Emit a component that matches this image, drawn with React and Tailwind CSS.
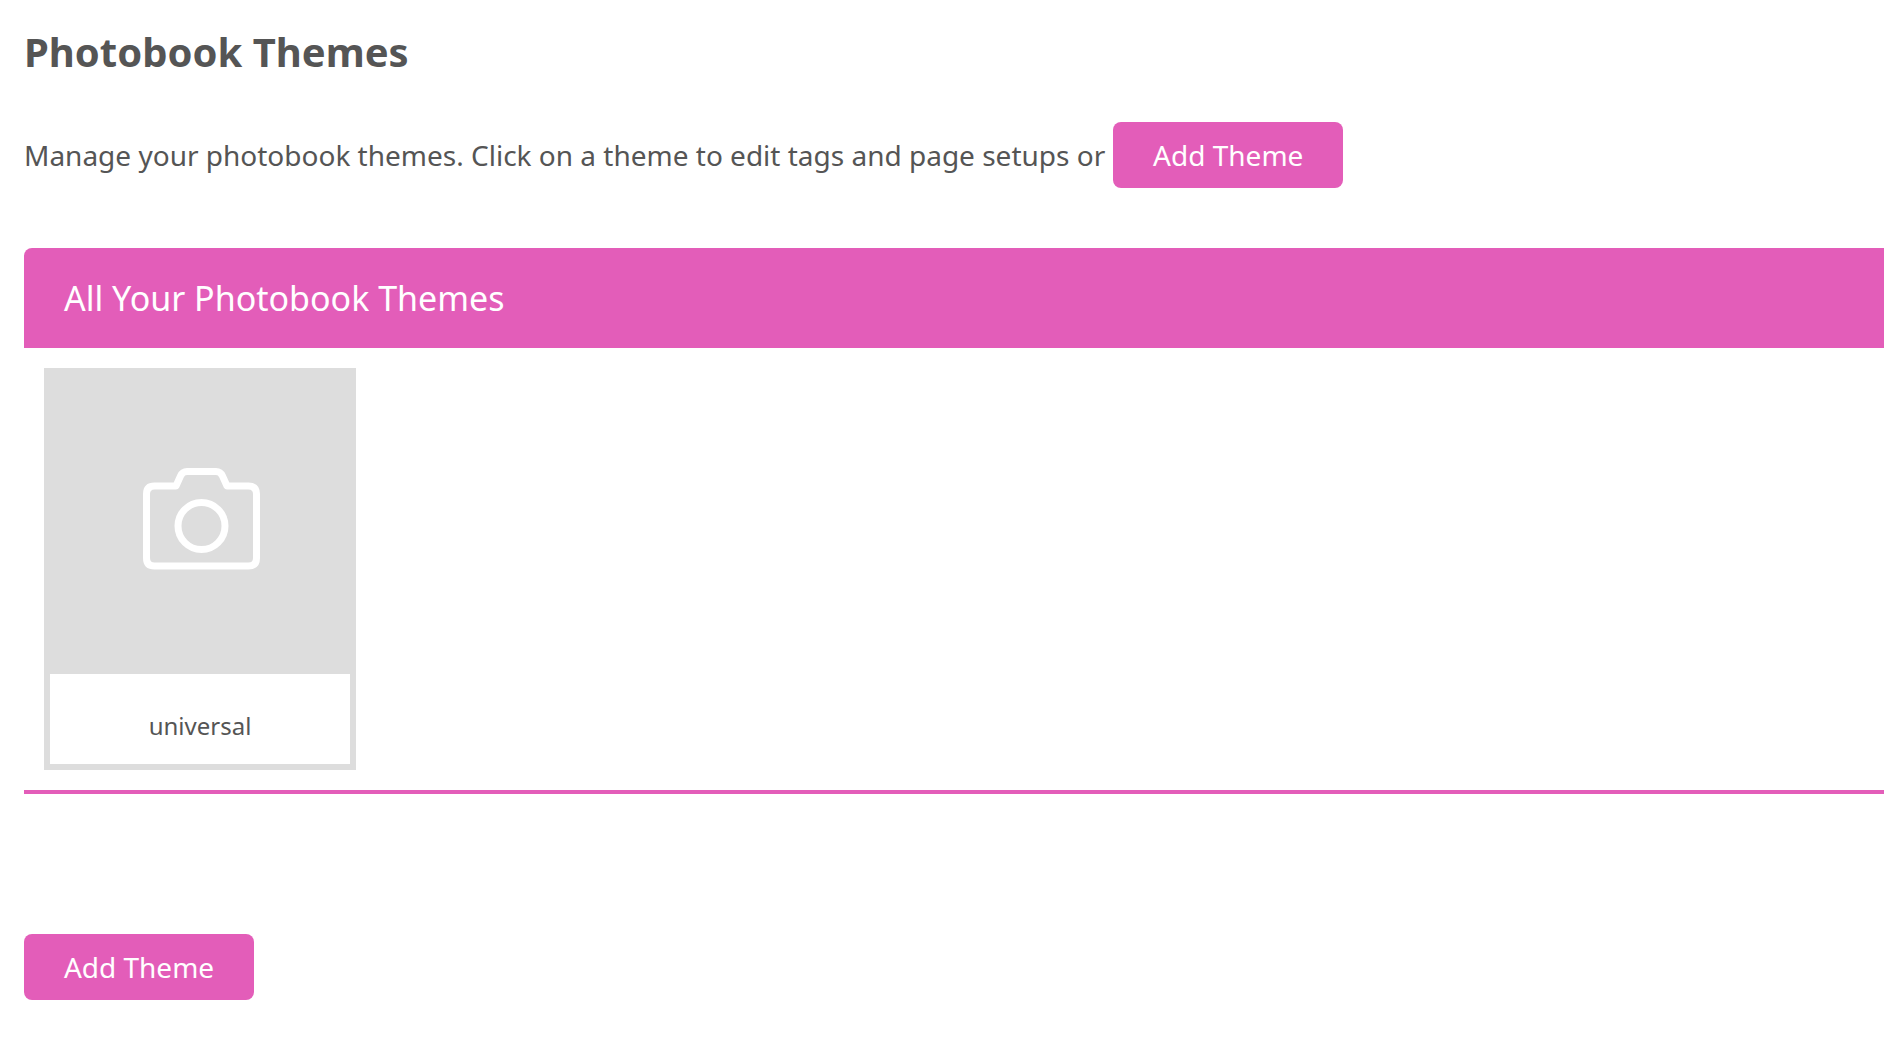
export default function App() {
  const btn = "inline-flex h-[66px] w-[230px] items-center justify-center rounded-[8px] bg-[#e35db9] text-[28px] text-white";
  return (
    <div className="min-h-[1038px] overflow-hidden bg-white pl-[24px] font-['Noto_Sans',sans-serif] text-[#555555]">
      <h1 className="pt-[24px] text-[40px] leading-[56px] font-bold">Photobook Themes</h1>
      <div className="mt-[42px] flex h-[66px] items-center gap-[8px] text-[28px]">
        <span className="whitespace-nowrap">Manage your photobook themes. Click on a theme to edit tags and page setups or</span>
        <button className={btn}>Add Theme</button>
      </div>
      <div className="mt-[60px] flex h-[100px] items-center rounded-tl-[8px] bg-[#e35db9] pl-[40px] text-[34px] text-white">
        All Your Photobook Themes
      </div>
      <div className="border-b-4 border-[#e35db9] pt-[20px] pb-[20px] pl-[20px]">
        <div className="flex h-[402px] w-[312px] flex-col border-[6px] border-[#dddddd] bg-[#dddddd]">
          <div className="flex h-[300px] items-start justify-center pt-[94px]">
            <svg width="117" height="102" viewBox="0 0 117 102" fill="none" stroke="#ffffff" strokeWidth="7" className="ml-[3px]">
              <path d="M11.5 18H33L37.5 8Q39.5 3.5 44 3.5H73Q77.5 3.5 79.5 8L84 18H105.5Q113.5 18 113.5 26V90Q113.5 98 105.5 98H11.5Q3.5 98 3.5 90V26Q3.5 18 11.5 18Z" strokeLinejoin="round" />
              <circle cx="58.5" cy="58" r="23.5" />
            </svg>
          </div>
          <div className="flex h-[90px] items-center justify-center bg-white pt-[14px] text-[24px]">universal</div>
        </div>
      </div>
      <div className="pt-[140px]">
        <button className={btn}>Add Theme</button>
      </div>
    </div>
  );
}
